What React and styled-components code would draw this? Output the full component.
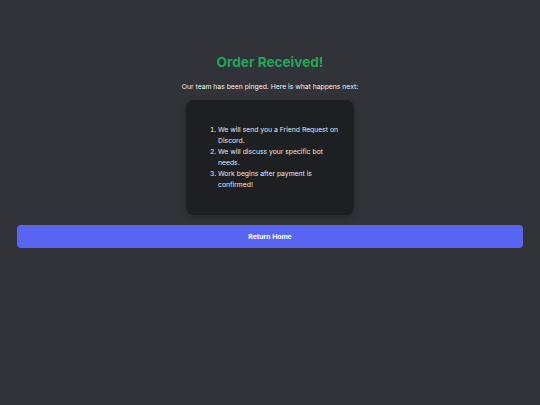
import React from "react";
import styled, { createGlobalStyle } from "styled-components";

const Global = createGlobalStyle`
  html, body { margin: 0; padding: 0; background: #313338; }
  body { font-family: Inter, "Noto Sans", sans-serif; color: #dbdee1; }
`;

const Page = styled.div`
  min-height: 405px;
  box-sizing: border-box;
  padding: 53px 17px 0;
  display: flex;
  flex-direction: column;
  align-items: center;
`;

const Title = styled.h1`
  margin: 0;
  font-size: 13.6px;
  line-height: 18px;
  font-weight: 700;
  color: #23a55a;
`;

const Subtitle = styled.p`
  margin: 11px 0 0;
  font-size: 6.8px;
  line-height: 10px;
  color: #f2f3f5;
`;

const Card = styled.div`
  margin-top: 8px;
  width: 168px;
  box-sizing: border-box;
  padding: 24px 12px 25px 16px;
  background: #1e1f22;
  border-radius: 8px;
  box-shadow: 0 2px 6px rgba(0, 0, 0, 0.25);
`;

const Steps = styled.ol`
  margin: 0;
  padding-left: 16px;
  font-size: 6.8px;
  line-height: 11px;
  color: #e6e8ea;
`;

const Step = styled.li``;

const Button = styled.button`
  margin-top: 10px;
  width: 100%;
  height: 23px;
  border: none;
  border-radius: 4px;
  background: #5865f2;
  color: #ffffff;
  font-family: inherit;
  font-size: 6.8px;
  font-weight: 700;
  cursor: pointer;
`;

export default function App() {
  return (
    <>
      <Global />
      <Page>
        <Title>Order Received!</Title>
        <Subtitle>Our team has been pinged. Here is what happens next:</Subtitle>
        <Card>
          <Steps>
            <Step>We will send you a Friend Request on Discord.</Step>
            <Step>We will discuss your specific bot needs.</Step>
            <Step>Work begins after payment is confirmed!</Step>
          </Steps>
        </Card>
        <Button>Return Home</Button>
      </Page>
    </>
  );
}
